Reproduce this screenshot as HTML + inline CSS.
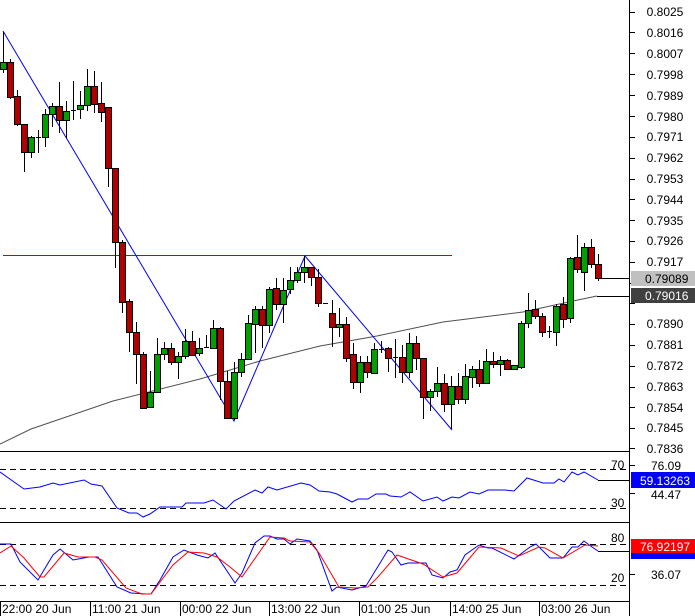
<!DOCTYPE html>
<html><head><meta charset="utf-8"><style>
html,body{margin:0;padding:0;background:#fff;width:695px;height:616px;overflow:hidden}
svg text{font-family:"Liberation Sans",sans-serif;font-size:12px;fill:#000}
</style></head><body>
<svg id="s" width="695" height="616" xmlns="http://www.w3.org/2000/svg" shape-rendering="crispEdges">
<rect width="695" height="616" fill="#fff"/>
<!-- axes -->
<line x1="629.5" y1="0" x2="629.5" y2="616" stroke="#000"/>
<line x1="0" y1="451.5" x2="629" y2="451.5" stroke="#000"/>
<line x1="0" y1="522.5" x2="629" y2="522.5" stroke="#000"/>
<line x1="0" y1="601.5" x2="629" y2="601.5" stroke="#000"/>
<g id="ticks" stroke="#000"></g>
<g text-anchor="middle">
<text x="665" y="16">0.8025</text><text x="665" y="37">0.8016</text><text x="665" y="58">0.8007</text><text x="665" y="79">0.7998</text><text x="665" y="100">0.7989</text><text x="665" y="121">0.7980</text><text x="665" y="141">0.7971</text><text x="665" y="162">0.7962</text><text x="665" y="183">0.7953</text><text x="665" y="204">0.7944</text><text x="665" y="225">0.7935</text><text x="665" y="245">0.7926</text><text x="665" y="266">0.7917</text><text x="665" y="328">0.7890</text><text x="665" y="349">0.7881</text><text x="665" y="370">0.7872</text><text x="665" y="391">0.7863</text><text x="665" y="412">0.7854</text><text x="665" y="432">0.7845</text><text x="665" y="453">0.7836</text>
<text x="666" y="470">76.09</text><text x="666" y="499">44.47</text><text x="666" y="579">36.07</text>
</g>
<rect x="631" y="271" width="64" height="15" fill="#c0c0c0"/>
<text x="645" y="283">0.79089</text>
<rect x="631" y="288" width="64" height="15" fill="#404040"/>
<text x="645" y="300" style="fill:#fff">0.79016</text>
<rect x="631" y="472" width="64" height="16" fill="#0000ff"/>
<text x="640" y="485" style="fill:#fff">59.13263</text>
<rect x="631" y="552" width="64" height="7" fill="#0000ff"/>
<rect x="631" y="539" width="64" height="14" fill="#ff0000"/>
<text x="640" y="551" style="fill:#fff">76.92197</text>
<!-- main chart lines -->
<line x1="3" y1="255.5" x2="452" y2="255.5" stroke="#d00000"/>
<polyline shape-rendering="auto" fill="none" stroke="#505050" points="0,444 31,429 113,401 200,379 260,361 320,346 377,336 443,322 523,312 573,301 597,296"/>
<line x1="597" y1="296.5" x2="629" y2="296.5" stroke="#000"/>
<line x1="598" y1="278.5" x2="629" y2="278.5" stroke="#000"/>
<polyline shape-rendering="auto" fill="none" stroke="#0000ff" points="3,31 234,421 305,256 452,430"/>
<g id="c"></g>
<!-- RSI -->
<line x1="0" y1="469.5" x2="629" y2="469.5" stroke="#000" stroke-dasharray="6,4"/>
<line x1="0" y1="508.5" x2="629" y2="508.5" stroke="#000" stroke-dasharray="6,4"/>
<text x="611" y="469">70</text><text x="611" y="507">30</text>
<polyline shape-rendering="auto" fill="none" stroke="#0000ff" points="0,472 24,489 40,487 53,483 60,485 84,480 91,484 102,486 117,508 129,513 137,513 143,517 150,514 160,507 182,507 186,503 204,503 213,500 226,509 234,501 255,490 262,493 268,487 277,490 301,483 310,485 319,491 330,492 337,494 352,502 358,499 368,499 376,494 386,494 390,496 401,497 410,492 423,501 437,497 443,501 452,497 459,498 470,492 479,494 488,490 505,490 514,491 527,478 543,483 554,483 559,479 564,482 572,472 578,475 584,472 598,480"/>
<line x1="598" y1="480.5" x2="629" y2="480.5" stroke="#000"/>
<!-- Stoch -->
<line x1="0" y1="544.5" x2="629" y2="544.5" stroke="#000" stroke-dasharray="6,4"/>
<line x1="0" y1="585.5" x2="629" y2="585.5" stroke="#000" stroke-dasharray="6,4"/>
<text x="611" y="542">80</text><text x="611" y="582">20</text>
<polyline shape-rendering="auto" fill="none" stroke="#0000ff" points="0,544 11,544 20,562 38,580 53,555 60,549 73,560 89,557 98,557 117,587 131,593 146,594 151,594 160,580 173,557 184,550 197,555 208,558 215,553 235,583 242,573 255,543 264,536 270,536 277,539 284,539 290,544 297,539 310,541 317,550 332,591 337,587 352,590 366,586 388,550 392,552 401,565 408,563 426,563 432,575 443,578 450,572 457,570 465,555 479,545 488,548 492,548 514,559 530,547 536,544 550,558 563,558 572,547 578,547 584,541 592,547 598,551"/>
<polyline shape-rendering="auto" fill="none" stroke="#ff0000" points="0,553 11,546 24,558 40,577 44,577 64,553 78,557 95,557 102,560 126,588 142,594 151,594 173,565 188,552 204,553 217,557 230,567 242,577 270,537 284,538 290,541 310,542 319,553 339,587 355,588 368,587 377,578 397,555 423,564 443,577 457,573 479,547 501,548 519,556 539,547 545,548 563,558 585,545 598,546"/>
<line x1="598" y1="551.5" x2="629" y2="551.5" stroke="#000"/>
<!-- time axis -->
<g stroke="#000"><line x1="0.5" y1="602" x2="0.5" y2="616"/><line x1="90.5" y1="602" x2="90.5" y2="616"/><line x1="180.5" y1="602" x2="180.5" y2="616"/><line x1="269.5" y1="602" x2="269.5" y2="616"/><line x1="359.5" y1="602" x2="359.5" y2="616"/><line x1="450.5" y1="602" x2="450.5" y2="616"/><line x1="539.5" y1="602" x2="539.5" y2="616"/></g>
<text x="2" y="613">22:00 20 Jun</text><text x="92" y="613">11:00 21 Jun</text><text x="182" y="613">00:00 22 Jun</text><text x="271" y="613">13:00 22 Jun</text><text x="361" y="613">01:00 25 Jun</text><text x="452" y="613">14:00 25 Jun</text><text x="541" y="613">03:00 26 Jun</text>
</svg>
<script>
var d=[[32,73,62,69,'g'],[59,99,62,97,'r'],[90,126,96,124,'r'],[124,172,124,152,'r'],[136,158,137,152,'g'],[130,153,137,137,'d'],[109,147,114,137,'g'],[103,127,106,114,'g'],[82,133,106,120,'r'],[101,138,111,120,'g'],[81,120,110,110,'d'],[91,119,105,109,'g'],[69,111,86,105,'g'],[71,113,86,104,'r'],[82,122,103,112,'r'],[107,187,107,168,'r'],[168,268,168,242,'r'],[240,313,242,302,'r'],[299,352,301,332,'r'],[322,384,332,354,'r'],[352,408,354,408,'r'],[371,407,392,407,'g'],[338,392,354,392,'g'],[342,360,348,354,'g'],[343,365,348,362,'r'],[352,379,356,362,'g'],[329,359,341,356,'g'],[331,355,341,355,'r'],[338,356,348,353,'g'],[335,347,347,347,'d'],[320,348,328,348,'g'],[327,400,328,381,'r'],[371,419,381,418,'r'],[362,420,372,418,'g'],[353,377,359,372,'g'],[315,359,323,359,'g'],[306,353,309,324,'g'],[306,348,309,325,'r'],[287,333,289,325,'g'],[278,310,288,304,'r'],[278,323,290,304,'g'],[267,294,280,289,'g'],[267,283,272,280,'g'],[256,283,267,272,'g'],[267,286,267,277,'r'],[269,307,277,303,'r'],[303,303,303,303,'d'],[300,347,313,327,'r'],[308,337,324,327,'g'],[317,362,324,358,'r'],[343,389,354,382,'r'],[356,393,362,382,'g'],[356,378,362,372,'r'],[343,374,349,373,'g'],[341,353,349,349,'d'],[347,372,348,358,'r'],[339,378,357,357,'d'],[345,383,357,372,'r'],[333,378,343,372,'g'],[336,370,343,358,'r'],[358,419,358,397,'r'],[389,411,391,397,'g'],[367,397,383,391,'g'],[374,412,383,404,'r'],[376,429,386,404,'g'],[373,404,386,399,'r'],[364,404,376,399,'g'],[366,388,369,377,'g'],[360,387,369,383,'r'],[349,383,361,383,'g'],[352,368,361,364,'r'],[356,376,360,364,'g'],[359,369,360,369,'r'],[365,370,365,369,'g'],[321,369,323,367,'g'],[293,328,310,323,'g'],[300,319,309,316,'r'],[313,337,316,332,'r'],[326,338,331,331,'d'],[304,346,306,332,'g'],[297,328,304,319,'r'],[257,323,258,318,'g'],[235,273,257,269,'r'],[243,291,247,272,'g'],[239,268,247,264,'r'],[254,281,264,278,'r']];
var ns='http://www.w3.org/2000/svg',g=document.getElementById('c'),t=document.getElementById('ticks');
function el(n,a,p){var e=document.createElementNS(ns,n);for(var k in a)e.setAttribute(k,a[k]);p.appendChild(e);}
d.forEach(function(c,i){var x=3+7*i;
el('line',{x1:x+.5,y1:c[0],x2:x+.5,y2:c[1],stroke:'#000'},g);
if(c[4]=='d'||c[3]-c[2]<1){el('line',{x1:x-2,y1:c[2]+.5,x2:x+3,y2:c[2]+.5,stroke:'#000'},g);}
else el('rect',{x:x-2.5,y:c[2]+.5,width:6,height:c[3]-c[2],fill:c[4]=='g'?'#00a000':'#b00000',stroke:'#000'},g);});
[12,32,53,74,95,116,137,158,179,199,220,241,262,283,303,324,345,366,387,407,428,448,465,493,574].forEach(function(y){el('line',{x1:629,y1:y+.5,x2:635,y2:y+.5},t);});
</script>
</body></html>
